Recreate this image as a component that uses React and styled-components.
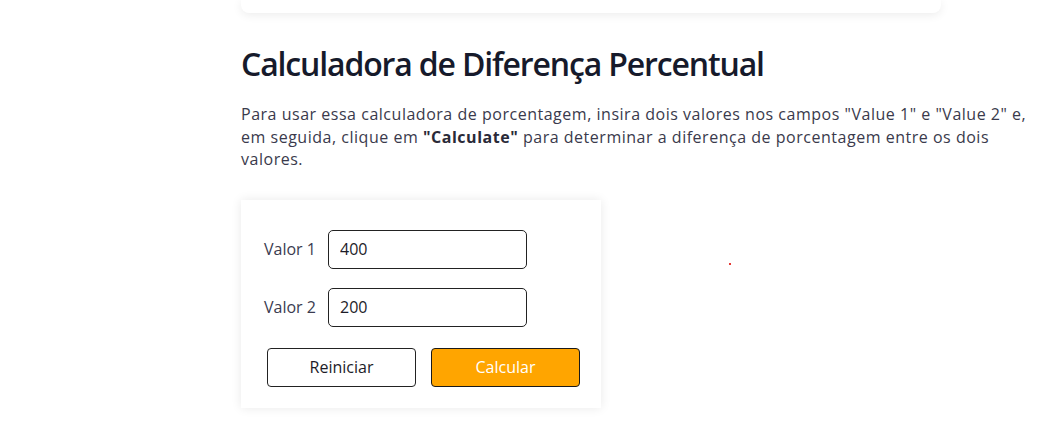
import React from 'react';
import styled, { createGlobalStyle } from 'styled-components';

const GlobalStyle = createGlobalStyle`
  html, body {
    margin: 0;
    background: #ffffff;
  }

  body {
    font-family: 'Open Sans', 'Noto Sans', sans-serif;
  }
`;

const App = () => {
  return (
    <Page>
      <GlobalStyle />
      <Column>
        <TopCard />
        <Title>Calculadora de Diferença Percentual</Title>
        <Intro>
          Para usar essa calculadora de porcentagem, insira dois valores nos campos "Value 1" e "Value 2" e,
          em seguida, clique em <strong>"Calculate"</strong> para determinar a diferença de porcentagem entre os dois
          valores.
        </Intro>
        <CalcRow>
          <CalcCard>
            <FieldRow>
              <Label>Valor 1</Label>
              <Input defaultValue='400' />
            </FieldRow>
            <FieldRow>
              <Label>Valor 2</Label>
              <Input defaultValue='200' />
            </FieldRow>
            <ButtonRow>
              <Button>Reiniciar</Button>
              <Button primary>Calcular</Button>
            </ButtonRow>
          </CalcCard>
          <Dot />
        </CalcRow>
      </Column>
    </Page>
  )
};

const Page = styled.div`
  min-height: 438px;
  padding-left: 241px;
`;

const Column = styled.div`
  width: 800px;
`;

const TopCard = styled.div`
  width: 700px;
  height: 13px;
  background: #ffffff;
  border-radius: 0 0 8px 8px;
  box-shadow: 0 2px 10px rgba(0, 0, 0, 0.08);
`;

const Title = styled.h2`
  margin: 31px 0 0;
  font-family: 'Open Sans', sans-serif;
  font-size: 32px;
  font-weight: 600;
  line-height: 40px;
  letter-spacing: -1.15px;
  color: #161a2b;
`;

const Intro = styled.p`
  margin: 19px 0 0;
  font-family: 'Open Sans', sans-serif;
  font-size: 16px;
  line-height: 22.5px;
  letter-spacing: 0.52px;
  color: #3a3a4c;

  strong {
    font-weight: 700;
    color: #2a2a38;
  }
`;

const CalcRow = styled.div`
  display: flex;
  align-items: flex-start;
  margin-top: 29px;
`;

const CalcCard = styled.div`
  width: 360px;
  box-sizing: border-box;
  padding: 30px 21px 21px 23px;
  background: #ffffff;
  box-shadow: 0 0 10px rgba(0, 0, 0, 0.09);
  display: flex;
  flex-direction: column;
  gap: 19px;
`;

const FieldRow = styled.div`
  display: flex;
  align-items: center;
`;

const Label = styled.label`
  width: 64px;
  font-size: 16px;
  color: #3b3b50;
`;

const Input = styled.input`
  width: 199px;
  height: 39px;
  box-sizing: border-box;
  padding: 0 11px;
  border: 1px solid #222;
  border-radius: 5px;
  font-family: 'Open Sans', sans-serif;
  font-size: 16px;
  color: #1c1c28;
  outline: none;
`;

const ButtonRow = styled.div`
  display: flex;
  gap: 15px;
  margin-top: 2px;
  padding-left: 3px;
`;

const Button = styled.button`
  width: 150px;
  height: 39px;
  box-sizing: border-box;
  border: 1px solid ${({ primary }) => (primary ? '#1a1a1a' : '#222')};
  border-radius: 4px;
  background: ${({ primary }) => (primary ? '#ffa500' : '#ffffff')};
  color: ${({ primary }) => (primary ? '#ffffff' : '#1c1c28')};
  font-family: 'Open Sans', sans-serif;
  font-size: 16px;
  cursor: pointer;
`;

const Dot = styled.span`
  width: 2px;
  height: 2px;
  margin: 63px 0 0 128px;
  background: #e53935;
`;

export default App;
